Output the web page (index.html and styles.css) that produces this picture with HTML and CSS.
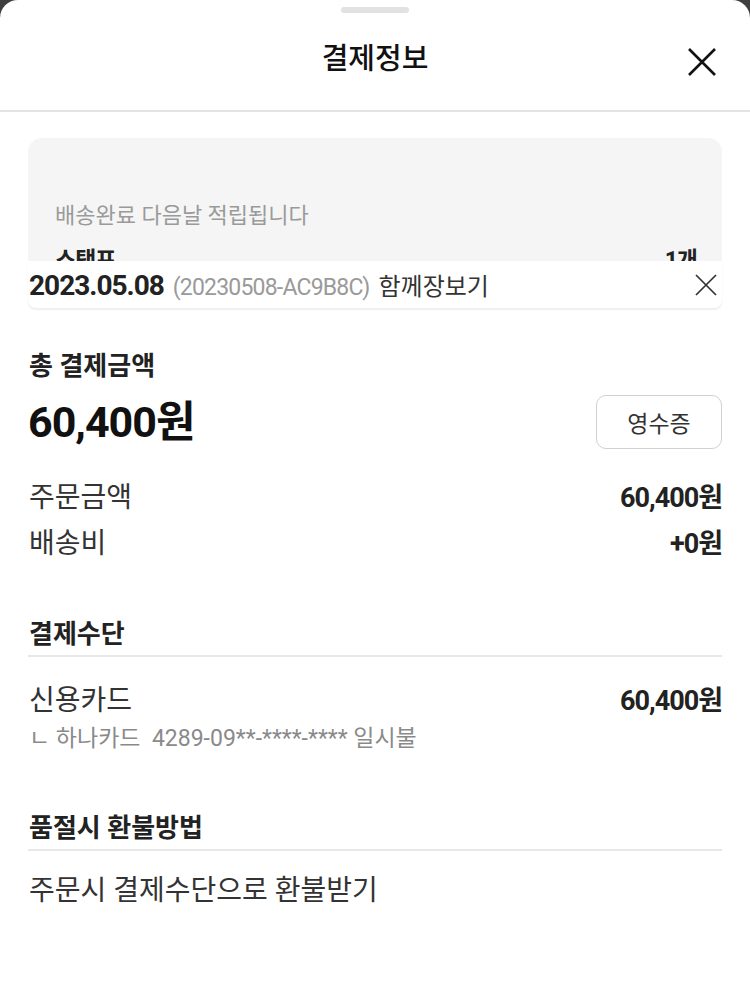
FILE: index.html
```html
<!DOCTYPE html>
<html lang="ko">
<head>
<meta charset="utf-8">
<title>결제정보</title>
<link rel="stylesheet" href="styles.css">
</head>
<body>
<div class="sheet">
  <div class="handle"></div>
  <header class="header">
    <span></span>
    <h1 class="title">결제정보</h1>
    <button class="close" aria-label="닫기">
      <svg width="28" height="28" viewBox="0 0 28 28"><path d="M1 1 L27 27 M27 1 L1 27" stroke="#111" stroke-width="2.6" fill="none"/></svg>
    </button>
  </header>

  <div class="card">
    <p class="card-note">배송완료 다음날 적립됩니다</p>
    <div class="card-row"><span>스탬프</span><span>1개</span></div>
  </div>
  <div class="strip">
    <div class="strip-text">
      <span class="date">2023.05.08</span>
      <span class="order-no">(20230508-AC9B8C)</span>
      <span class="shop">함께장보기</span>
    </div>
    <svg class="strip-x" width="22" height="22" viewBox="0 0 22 22"><path d="M1 1 L21 21 M21 1 L1 21" stroke="#333" stroke-width="1.7" fill="none"/></svg>
  </div>

  <section class="total">
    <h2 class="label">총 결제금액</h2>
    <div class="amount-row">
      <span class="amount">60,400원</span>
      <button class="receipt">영수증</button>
    </div>
    <div class="rows">
      <div class="row"><span>주문금액</span><span class="val">60,400원</span></div>
      <div class="row"><span>배송비</span><span class="val">+0원</span></div>
    </div>
  </section>

  <section class="block pay">
    <h2 class="block-title">결제수단</h2>
    <div class="row first"><span>신용카드</span><span class="val">60,400원</span></div>
    <p class="detail">ㄴ 하나카드&nbsp; 4289-09**-****-**** 일시불</p>
  </section>

  <section class="block refund">
    <h2 class="block-title">품절시 환불방법</h2>
    <p class="row first">주문시 결제수단으로 환불받기</p>
  </section>
</div>
</body>
</html>
```

FILE: styles.css
```css
* { box-sizing: border-box; }
html, body { margin: 0; padding: 0; }
body {
  background: #3f3f3f;
  font-family: Roboto, "Noto Sans CJK KR", sans-serif;
  color: #222;
}
h1, h2, p { margin: 0; font-weight: inherit; }
button { font-family: inherit; letter-spacing: inherit; background: none; border: 0; padding: 0; cursor: pointer; }

.sheet {
  background: #fff;
  border-radius: 18px 18px 0 0;
  min-height: 986px;
  overflow: hidden;
}
.handle {
  width: 68px;
  height: 6px;
  border-radius: 3px;
  background: #e2e2e2;
  margin: 7px auto 0;
}
.header {
  display: grid;
  grid-template-columns: 1fr auto 1fr;
  height: 99px;
  padding: 26px 34px 0;
  border-bottom: 2px solid #e1e3e6;
}
.title {
  font-size: 29px;
  font-weight: 500;
  line-height: 40px;
  color: #111;
}
.close {
  justify-self: end;
  align-self: start;
  margin-top: 9px;
  width: 28px;
  height: 28px;
  display: block;
}
.close svg { display: block; }

.card {
  margin: 26px 28px 0;
  height: 123px;
  overflow: hidden;
  background: #f5f5f5;
  border-radius: 14px 14px 0 0;
  padding: 63px 25px 0 27px;
}
.card-note {
  font-size: 22px;
  line-height: 30px;
  color: #9a9a9a;
}
.card-row {
  display: flex;
  justify-content: space-between;
  margin-top: 15px;
  font-size: 23px;
  font-weight: 700;
  line-height: 30px;
  color: #222;
  letter-spacing: -1px;
}

.strip {
  margin: 0 28px;
  height: 47px;
  display: flex;
  align-items: center;
  justify-content: space-between;
  padding: 0 5px 0 1px;
  background: #fff;
  border-radius: 0 0 8px 8px;
  box-shadow: 0 2px 2px rgba(0, 0, 0, 0.07);
}
.strip-text { display: flex; align-items: baseline; gap: 9px; }
.date { font-size: 28px; font-weight: 700; color: #222; letter-spacing: -1px; }
.order-no { font-size: 23px; color: #9a9a9a; letter-spacing: -0.8px; }
.shop { font-size: 24px; color: #333; }
.strip-x { display: block; }

.total { margin: 42px 28px 0 28px; }
.label {
  font-size: 26px;
  font-weight: 700;
  line-height: 32px;
  color: #222;
  padding-left: 1px;
}
.amount-row {
  display: flex;
  justify-content: space-between;
  align-items: center;
  margin-top: 13px;
}
.amount {
  font-size: 43px;
  font-weight: 700;
  line-height: 50px;
  color: #111;
  letter-spacing: -1px;
}
.receipt {
  width: 126px;
  height: 54px;
  border: 1.5px solid #d0d0d0;
  border-radius: 10px;
  font-size: 23px;
  color: #333;
}
.rows {
  margin-top: 31px;
  display: flex;
  flex-direction: column;
  gap: 10px;
  padding-left: 1px;
}
.row {
  display: flex;
  justify-content: space-between;
  align-items: center;
  font-size: 28px;
  line-height: 36px;
  color: #333;
}
.val {
  font-size: 27px;
  font-weight: 700;
  color: #222;
  letter-spacing: -1px;
}

.block { margin: 0 28px 0 29px; }
.pay { margin-top: 56px; }
.refund { margin-top: 57px; }
.block-title {
  font-size: 26px;
  font-weight: 700;
  line-height: 32px;
  color: #222;
  padding-bottom: 5px;
  border-bottom: 2px solid #e8e8e8;
  margin-left: -1px;
  padding-left: 1px;
}
.row.first { margin-top: 26px; }
.refund .row.first { margin-top: 22px; }
.detail {
  margin-top: 4px;
  font-size: 23px;
  line-height: 32px;
  color: #8a8a8a;
}
```
